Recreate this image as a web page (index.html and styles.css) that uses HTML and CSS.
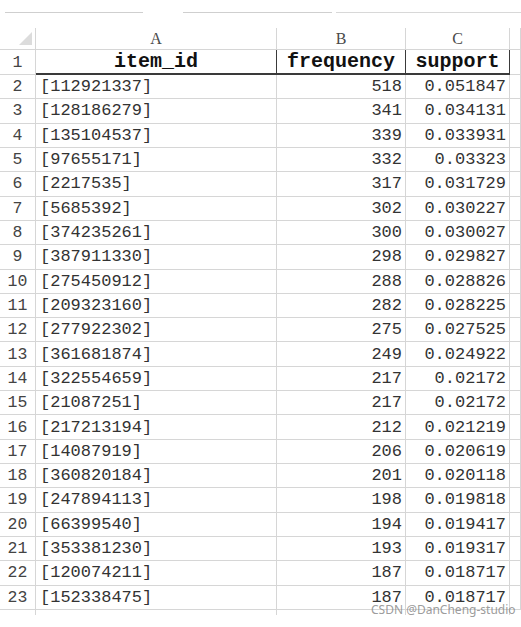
FILE: index.html
```html
<!DOCTYPE html>
<html>
<head>
<meta charset="utf-8">
<link rel="stylesheet" href="styles.css">
</head>
<body>
<div class="page">
  <div class="topbar">
    <span class="seg seg1"></span>
    <span class="seg seg2"></span>
    <span class="seg seg3"></span>
  </div>
  <div class="sheet">
    <div class="corner"><span class="tri"></span></div>
    <div class="colh">A</div><div class="colh">B</div><div class="colh">C</div><div class="colh"></div>

    <div class="rh">1</div><div class="hd hdA">item_id</div><div class="hd">frequency</div><div class="hd">support</div><div class="c"></div>

    <div class="rh">2</div><div class="c t">[112921337]</div><div class="c n">518</div><div class="c n">0.051847</div><div class="c"></div>
    <div class="rh">3</div><div class="c t">[128186279]</div><div class="c n">341</div><div class="c n">0.034131</div><div class="c"></div>
    <div class="rh">4</div><div class="c t">[135104537]</div><div class="c n">339</div><div class="c n">0.033931</div><div class="c"></div>
    <div class="rh">5</div><div class="c t">[97655171]</div><div class="c n">332</div><div class="c n">0.03323</div><div class="c"></div>
    <div class="rh">6</div><div class="c t">[2217535]</div><div class="c n">317</div><div class="c n">0.031729</div><div class="c"></div>
    <div class="rh">7</div><div class="c t">[5685392]</div><div class="c n">302</div><div class="c n">0.030227</div><div class="c"></div>
    <div class="rh">8</div><div class="c t">[374235261]</div><div class="c n">300</div><div class="c n">0.030027</div><div class="c"></div>
    <div class="rh">9</div><div class="c t">[387911330]</div><div class="c n">298</div><div class="c n">0.029827</div><div class="c"></div>
    <div class="rh">10</div><div class="c t">[275450912]</div><div class="c n">288</div><div class="c n">0.028826</div><div class="c"></div>
    <div class="rh">11</div><div class="c t">[209323160]</div><div class="c n">282</div><div class="c n">0.028225</div><div class="c"></div>
    <div class="rh">12</div><div class="c t">[277922302]</div><div class="c n">275</div><div class="c n">0.027525</div><div class="c"></div>
    <div class="rh">13</div><div class="c t">[361681874]</div><div class="c n">249</div><div class="c n">0.024922</div><div class="c"></div>
    <div class="rh">14</div><div class="c t">[322554659]</div><div class="c n">217</div><div class="c n">0.02172</div><div class="c"></div>
    <div class="rh">15</div><div class="c t">[21087251]</div><div class="c n">217</div><div class="c n">0.02172</div><div class="c"></div>
    <div class="rh">16</div><div class="c t">[217213194]</div><div class="c n">212</div><div class="c n">0.021219</div><div class="c"></div>
    <div class="rh">17</div><div class="c t">[14087919]</div><div class="c n">206</div><div class="c n">0.020619</div><div class="c"></div>
    <div class="rh">18</div><div class="c t">[360820184]</div><div class="c n">201</div><div class="c n">0.020118</div><div class="c"></div>
    <div class="rh">19</div><div class="c t">[247894113]</div><div class="c n">198</div><div class="c n">0.019818</div><div class="c"></div>
    <div class="rh">20</div><div class="c t">[66399540]</div><div class="c n">194</div><div class="c n">0.019417</div><div class="c"></div>
    <div class="rh">21</div><div class="c t">[353381230]</div><div class="c n">193</div><div class="c n">0.019317</div><div class="c"></div>
    <div class="rh">22</div><div class="c t">[120074211]</div><div class="c n">187</div><div class="c n">0.018717</div><div class="c"></div>
    <div class="rh">23</div><div class="c t">[152338475]</div><div class="c n">187</div><div class="c n">0.018717</div><div class="c"></div>

    <div class="tail"></div><div class="tail"></div><div class="tail"></div><div class="tail"></div><div class="tail none"></div>
  </div>
  <div class="watermark">CSDN @DanCheng-studio</div>
</div>
</body>
</html>
```

FILE: styles.css
```css
html, body {
  margin: 0;
  padding: 0;
  background: #ffffff;
}

.page {
  position: relative;
  width: 521px;
  height: 627px;
  overflow: hidden;
}

.topbar {
  display: flex;
  height: 28px;
  padding-top: 12px;
  box-sizing: border-box;
}

.seg {
  display: block;
  height: 0;
  border-top: 1px solid #cfcfcf;
}

.seg1 { margin-left: 5px; width: 138px; }
.seg2 { margin-left: 40px; width: 149px; }
.seg3 { margin-left: 4px; flex: 1; border-top-color: #d8d8d8; }

.sheet {
  display: grid;
  grid-template-columns: 36px 241px 129px 104px 11px;
  grid-template-rows: 22px 25px repeat(22, 24.32px) 5px;
  font-family: "Liberation Mono", monospace;
  color: #333333;
}

.sheet > div {
  box-sizing: border-box;
  border-right: 1px solid #d6d6d6;
  border-bottom: 1px solid #d6d6d6;
  display: flex;
  align-items: center;
  white-space: nowrap;
  overflow: hidden;
}

.corner {
  position: relative;
}

.tri {
  position: absolute;
  right: 3px;
  bottom: 4px;
  width: 0;
  height: 0;
  border-left: 13px solid transparent;
  border-bottom: 13px solid #dcdcdc;
}

.colh {
  justify-content: center;
  font-family: "Liberation Serif", serif;
  font-size: 16px;
  color: #4a4a4a;
  padding-top: 1px;
}

.rh {
  justify-content: center;
  font-size: 16.5px;
  color: #444444;
}

.hd {
  justify-content: center;
  font-weight: bold;
  font-size: 20px;
  color: #111111;
  border-bottom: 2px solid #3a3a3a !important;
  border-right: 1px solid #3a3a3a !important;
}

.c {
  font-size: 17px;
}

.t {
  padding-left: 4px;
}

.n {
  justify-content: flex-end;
  padding-right: 3px;
}

.sheet > .tail {
  border-bottom: none;
}

.sheet > .tail.none {
  border-right: none;
}

.watermark {
  position: absolute;
  left: 371px;
  top: 602px;
  font-family: "Noto Sans", sans-serif;
  font-size: 12px;
  line-height: 16px;
  color: rgba(130, 130, 130, 0.8);
  white-space: nowrap;
}
```
